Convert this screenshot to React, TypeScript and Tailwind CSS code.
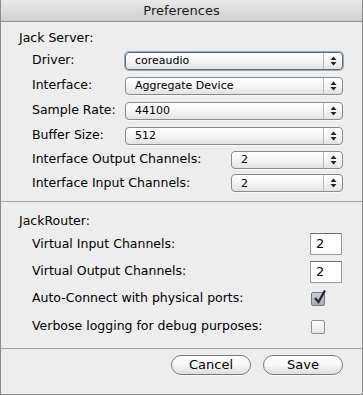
import React from 'react';

const font = { fontFamily: '"Lucida Grande", "DejaVu Sans", sans-serif' };

const Arrows: React.FC = () => (
  <svg width="7" height="10" viewBox="0 0 7 10">
    <path d="M3.5 0.5 L6.5 4 L0.5 4 Z" fill="#222" />
    <path d="M0.5 6 L6.5 6 L3.5 9.5 Z" fill="#222" />
  </svg>
);

const Popup: React.FC<{ value: string; width: string; focus?: boolean }> = ({ value, width, focus }) => (
  <div
    className={`${width} h-[18px] flex items-stretch rounded-[4px] border bg-gradient-to-b from-white via-[#f4f4f4] to-[#e2e2e2] ${
      focus ? 'border-[#5f6c7e] shadow-[0_0_0_1px_#9aa7b8]' : 'border-[#8a8a8a] shadow-[0_1px_0_#f8f8f8]'
    }`}
  >
    <div className="flex-1 flex items-center pl-[9px] text-[11px] text-black leading-none">{value}</div>
    <div className="w-[19px] border-l border-[#b9b9b9] flex items-center justify-center">
      <Arrows />
    </div>
  </div>
);

const Row: React.FC<{ label: string; h: string; children: React.ReactNode }> = ({ label, h, children }) => (
  <div className={`${h} flex items-center pl-[31px] pr-[19px] justify-between`}>
    <span className="text-[12.5px] text-black">{label}</span>
    {children}
  </div>
);

const Field: React.FC<{ value: string }> = ({ value }) => (
  <div className="w-[32px] h-[22px] bg-white border border-[#9b9b9b] border-t-[#6e6e6e] flex items-center pl-[5px] text-[13px] text-black mr-[1px]">
    {value}
  </div>
);

const Check: React.FC<{ checked?: boolean }> = ({ checked }) => (
  <div
    className={`w-[14px] h-[14px] rounded-[2px] border mr-[18px] relative ${
      checked
        ? 'border-[#6f7681] bg-gradient-to-b from-[#c9ced6] to-[#a8afb9]'
        : 'border-[#909090] bg-gradient-to-b from-white to-[#e6e6e6]'
    }`}
  >
    {checked && (
      <svg className="absolute left-[1px] -top-[4px]" width="14" height="16" viewBox="0 0 14 16">
        <path d="M2 9 L5.5 13 L12 1.5" stroke="#2a2a2a" strokeWidth="2.4" fill="none" strokeLinejoin="miter" />
      </svg>
    )}
  </div>
);

const Button: React.FC<{ label: string }> = ({ label }) => (
  <div className="w-[80px] h-[20px] rounded-full border border-[#777] bg-gradient-to-b from-white via-[#f6f6f6] to-[#dedede] shadow-[0_1px_0_#fafafa] flex items-center justify-center text-[13px] text-black">
    {label}
  </div>
);

export default function App() {
  return (
    <div className="w-[363px] h-[395px] bg-[#ededed] border-x border-b border-[#8c8c8c] flex flex-col" style={font}>
      {/* Title bar */}
      <div className="h-[22px] bg-gradient-to-b from-[#e9e9e9] to-[#cfcfcf] border-b border-[#8f8f8f] flex items-center justify-center text-[13px] text-[#1a1a1a]">
        Preferences
      </div>

      {/* Jack Server */}
      <div className="pt-[7px] pl-[18px] h-[21px] text-[12.5px] text-black">Jack Server:</div>
      <div className="pt-[5px] flex flex-col">
        <Row label="Driver:" h="h-[25px]">
          <Popup value="coreaudio" width="w-[218px]" focus />
        </Row>
        <Row label="Interface:" h="h-[25px]">
          <Popup value="Aggregate Device" width="w-[218px]" />
        </Row>
        <Row label="Sample Rate:" h="h-[25px]">
          <Popup value="44100" width="w-[218px]" />
        </Row>
        <Row label="Buffer Size:" h="h-[25px]">
          <Popup value="512" width="w-[218px]" />
        </Row>
        <Row label="Interface Output Channels:" h="h-[23px]">
          <Popup value="2" width="w-[112px]" />
        </Row>
        <Row label="Interface Input Channels:" h="h-[24px]">
          <Popup value="2" width="w-[112px]" />
        </Row>
      </div>

      <div className="mt-[6px] border-t border-[#a3a3a3]" />

      {/* JackRouter */}
      <div className="pt-[10px] pl-[18px] h-[28px] text-[12.5px] text-black">JackRouter:</div>
      <div className="flex flex-col">
        <Row label="Virtual Input Channels:" h="h-[28px]">
          <Field value="2" />
        </Row>
        <Row label="Virtual Output Channels:" h="h-[27px]">
          <Field value="2" />
        </Row>
        <Row label="Auto-Connect with physical ports:" h="h-[27px]">
          <Check checked />
        </Row>
        <Row label="Verbose logging for debug purposes:" h="h-[29px]">
          <Check />
        </Row>
      </div>

      <div className="mt-[7px] border-t border-[#a3a3a3]" />

      <div className="pt-[6px] pr-[19px] flex justify-end gap-[12px]">
        <Button label="Cancel" />
        <Button label="Save" />
      </div>
    </div>
  );
}
